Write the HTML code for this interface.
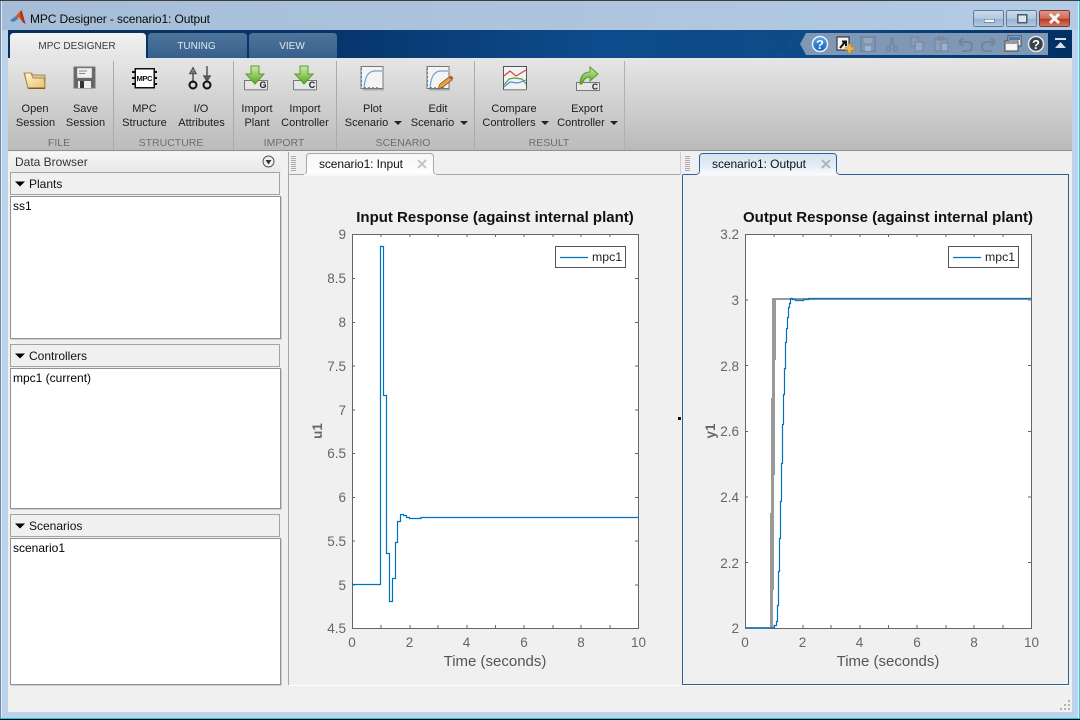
<!DOCTYPE html>
<html><head><meta charset="utf-8"><title>MPC Designer - scenario1: Output</title>
<style>
html,body{margin:0;padding:0;background:#000;width:1080px;height:720px;overflow:hidden}
svg{display:block}
text{font-family:"Liberation Sans",sans-serif}
.rb{font-size:11px;fill:#1c1c1c;text-anchor:middle}
.gl{font-size:10.5px;fill:#6e6e6e;text-anchor:middle}
.pn{font-size:12px;fill:#111}
.li{font-size:12px;fill:#000}
.tke{font-size:13.5px;fill:#666;text-anchor:end}
.tkm{font-size:13.5px;fill:#666;text-anchor:middle}
.axl{font-size:15px;fill:#555;text-anchor:middle}
.ttl{font-size:15px;font-weight:bold;fill:#111;text-anchor:middle}
.ax{fill:#fff;stroke:#666;stroke-width:1}
.tick{stroke:#666;stroke-width:1;fill:none}
.cv{fill:none;stroke:#0072bd;stroke-width:1.2;shape-rendering:geometricPrecision}
</style></head><body>
<svg width="1080" height="720" viewBox="0 0 1080 720" xmlns="http://www.w3.org/2000/svg" shape-rendering="crispEdges">
<defs>
<linearGradient id="frh" x1="0" y1="0" x2="1" y2="0"><stop offset="0" stop-color="#a5bdd8"/><stop offset=".5" stop-color="#aec4dc"/><stop offset="1" stop-color="#b3cbe4"/></linearGradient>
<linearGradient id="band" x1="0" y1="0" x2="1" y2="0"><stop offset="0" stop-color="#06305f"/><stop offset=".3" stop-color="#06356b"/><stop offset=".55" stop-color="#0e4b8c"/><stop offset=".75" stop-color="#0f4a88"/><stop offset="1" stop-color="#013063"/></linearGradient>
<linearGradient id="tb" x1="0" y1="0" x2="0" y2="1"><stop offset="0" stop-color="#e6e6e6"/><stop offset="1" stop-color="#bababa"/></linearGradient>
<linearGradient id="strip" x1="0" y1="0" x2="0" y2="1"><stop offset="0" stop-color="#c2c2c2"/><stop offset="1" stop-color="#bcbcbc"/></linearGradient>
<linearGradient id="at" x1="0" y1="0" x2="0" y2="1"><stop offset="0" stop-color="#f2f2f2"/><stop offset="1" stop-color="#e4e4e4"/></linearGradient>
<linearGradient id="it" x1="0" y1="0" x2="0" y2="1"><stop offset="0" stop-color="#4f7499"/><stop offset="1" stop-color="#35608c"/></linearGradient>
<linearGradient id="hd" x1="0" y1="0" x2="0" y2="1"><stop offset="0" stop-color="#f6f6f6"/><stop offset="1" stop-color="#e8e8e8"/></linearGradient>
<linearGradient id="tabw" x1="0" y1="0" x2="0" y2="1"><stop offset="0" stop-color="#f4f6f8"/><stop offset="1" stop-color="#ffffff"/></linearGradient>
<linearGradient id="tabb" x1="0" y1="0" x2="0" y2="1"><stop offset="0" stop-color="#d3e3f2"/><stop offset=".6" stop-color="#e3edf6"/><stop offset="1" stop-color="#fbfcfd"/></linearGradient>
<linearGradient id="wb" x1="0" y1="0" x2="0" y2="1"><stop offset="0" stop-color="#c9d9ea"/><stop offset=".5" stop-color="#b3c9e0"/><stop offset=".55" stop-color="#96b2cf"/><stop offset="1" stop-color="#b4cbe2"/></linearGradient>
<linearGradient id="wc" x1="0" y1="0" x2="0" y2="1"><stop offset="0" stop-color="#e19a8c"/><stop offset=".5" stop-color="#cf6a56"/><stop offset=".55" stop-color="#b93c26"/><stop offset="1" stop-color="#d2796a"/></linearGradient>
<linearGradient id="fold" x1="0" y1="0" x2="1" y2="1"><stop offset="0" stop-color="#fff8d8"/><stop offset="1" stop-color="#e9bf6c"/></linearGradient>
<linearGradient id="arr" x1="0" y1="0" x2="0" y2="1"><stop offset="0" stop-color="#cdeba6"/><stop offset="1" stop-color="#55a81f"/></linearGradient>
<linearGradient id="blu" x1="0" y1="0" x2="0" y2="1"><stop offset="0" stop-color="#5ba8ea"/><stop offset="1" stop-color="#0f5fb8"/></linearGradient>
<g id="imp">
 <rect x="0.5" y="14.5" width="23" height="9" fill="#e6e6e6" stroke="#777"/>
 <rect x="1" y="23" width="23" height="1.5" fill="#999"/>
 <path d="M7 0H15V8H20L11 18 2 8H7Z" fill="url(#arr)" stroke="#5b9a2c" stroke-width="1" shape-rendering="geometricPrecision"/>
</g>
<g id="plotic">
 <rect x="1" y="0.5" width="22" height="22" fill="#f4f4f4" stroke="#777"/>
 <rect x="3" y="23" width="21" height="1.5" fill="#aaa"/>
 <path d="M1 3h1M1 7h1M1 11h1M1 15h1M1 19h1M5 22v-1M9 22v-1M13 22v-1M17 22v-1" stroke="#333"/>
 <path d="M4 22C5 12 7 6 14 5H22" fill="none" stroke="#6da2d8" stroke-width="1.2" shape-rendering="geometricPrecision"/>
</g>
</defs>

<!-- window frame -->
<rect width="1080" height="720" fill="#bcd3ec"/>
<rect x="0" y="0" width="1080" height="30" fill="url(#frh)"/>
<rect x="0" y="0" width="1080" height="1" fill="#3d3d3d"/>
<rect x="0" y="1" width="1" height="719" fill="#6f8ba8"/>
<rect x="1" y="1" width="1" height="718" fill="#dfeaf5"/>
<rect x="1079" y="1" width="1" height="718" fill="#35c5e0"/>
<rect x="1078" y="1" width="1" height="718" fill="#dfeaf5"/>
<rect x="0" y="718" width="1080" height="1" fill="#19c4e4"/>
<rect x="0" y="719" width="1080" height="1" fill="#0a0a0a"/>

<!-- title -->
<g shape-rendering="geometricPrecision">
 <path d="M10 20.500L15.500 16.500 19 12.500 21.500 10 25.500 24 22 21.500 18.500 17 14.500 20.500 13 21.500Z" fill="#d9531e"/>
 <path d="M21.500 10L25.500 24 23 22.500 20 13Z" fill="#a92f17"/>
 <path d="M10 20.500L15 16.500 18.500 18.500 13.500 22Z" fill="#3f7fbf"/>
</g>
<text x="30" y="23" style="font-size:12px" fill="#0a0a0a" textLength="180">MPC Designer - scenario1: Output</text>

<!-- window buttons -->
<rect x="973.5" y="10.5" width="30" height="16" rx="2" fill="url(#wb)" stroke="#5f7b98"/>
<rect x="984" y="19" width="10" height="3" fill="#f2f6fa" stroke="#4d5f73" stroke-width=".5"/>
<rect x="1006.5" y="10.5" width="30" height="16" rx="2" fill="url(#wb)" stroke="#5f7b98"/>
<rect x="1017.5" y="14.5" width="9" height="8" fill="#dbe6f0" stroke="#4a5c70" stroke-width="1.5"/>
<rect x="1039.5" y="10.5" width="30" height="16" rx="2" fill="url(#wc)" stroke="#7a3a32"/>
<path d="M1050 14L1059 23M1059 14L1050 23" stroke="#f7f7f7" stroke-width="3" shape-rendering="geometricPrecision"/>

<!-- ribbon band -->
<rect x="8" y="30" width="1064" height="28" fill="url(#band)"/>
<g fill="none" stroke="#1f5a97" stroke-width="1" opacity=".35" shape-rendering="geometricPrecision">
 <path d="M780 58L800 30M790 30L812 58M760 30L782 58M800 58L780 30"/>
</g>

<!-- tabs -->
<path d="M10 58V37Q10 33 14 33H142Q146 33 146 37V58Z" fill="url(#at)" shape-rendering="geometricPrecision"/>
<path d="M148 58V37Q148 33 152 33H243Q247 33 247 37V58Z" fill="url(#it)" shape-rendering="geometricPrecision"/>
<path d="M249 58V37Q249 33 253 33H333Q337 33 337 37V58Z" fill="url(#it)" shape-rendering="geometricPrecision"/>
<text x="77" y="49" style="font-size:10px" fill="#3a3a3a" text-anchor="middle">MPC DESIGNER</text>
<text x="196.500" y="49" style="font-size:10px" fill="#dfe8f1" text-anchor="middle">TUNING</text>
<text x="292" y="49" style="font-size:10px" fill="#dfe8f1" text-anchor="middle">VIEW</text>

<!-- quick access -->
<path d="M800 44L806 33H1048V55H806Z" fill="#7f98b6" shape-rendering="geometricPrecision"/>
<g shape-rendering="geometricPrecision">
 <circle cx="820" cy="44" r="7.5" fill="url(#blu)" stroke="#e8f2fb" stroke-width="1.5"/>
 <text x="820" y="49" style="font-size:13px;font-weight:bold" fill="#fff" text-anchor="middle">?</text>
 <rect x="837" y="37" width="12" height="13" fill="#f3f3f3" stroke="#222"/>
 <path d="M840 48L845 42M842 41.5H846V46" stroke="#111" stroke-width="2" fill="none"/>
 <path d="M848 44h3v3h3v3h-3v3h-3v-3h-3v-3h3Z" fill="#f2b544" stroke="#b87f1f" stroke-width=".5"/>
 <g opacity=".55" fill="none" stroke="#66768a">
  <rect x="861" y="37" width="14" height="14" fill="#8296ac" stroke-width="1.5"/><rect x="864" y="38" width="8" height="5" fill="#a5b4c5" stroke="none"/><rect x="865" y="46" width="6" height="5" fill="#c2ccd8" stroke="none"/>
  <path d="M894 37L889 47M890 37L895 47" stroke-width="1.3"/><circle cx="888.5" cy="49" r="2" stroke-width="1.3"/><circle cx="895.5" cy="49" r="2" stroke-width="1.3"/>
  <rect x="911" y="37" width="7" height="9" fill="#93a5b8"/><rect x="915" y="42" width="8" height="9" fill="#a9b8c8"/>
  <rect x="935" y="39" width="12" height="12" fill="#98a9bb"/><rect x="938" y="37" width="6" height="3" fill="#76889c"/><rect x="941" y="43" width="7" height="8" fill="#b6c3d0"/>
  <path d="M959 42H968Q972 42 972 46.5T968 51H962M959 42L963 38M959 42L963 46" stroke-width="2"/>
  <path d="M995 42H986Q982 42 982 46.5T986 51H992M995 42L991 38M995 42L991 46" stroke-width="2"/>
 </g>
 <rect x="1008" y="36" width="13" height="10" fill="#eef2f6" stroke="#444"/><rect x="1009" y="37" width="11" height="3" fill="#3f7fbd"/>
 <rect x="1005" y="41" width="13" height="10" fill="#f5f5f5" stroke="#444"/><rect x="1006" y="42" width="11" height="2" fill="#999"/>
 <circle cx="1036" cy="44" r="7.5" fill="#39424d" stroke="#e2e6ea" stroke-width="1.5"/>
 <text x="1036" y="49" style="font-size:13px;font-weight:bold" fill="#fff" text-anchor="middle">?</text>
</g>
<rect x="1055" y="38" width="11" height="2" fill="#d4dde8"/>
<path d="M1055 48L1060.500 42 1066 48Z" fill="#d4dde8" shape-rendering="geometricPrecision"/>

<!-- toolstrip -->
<rect x="8" y="58" width="1064" height="92" fill="url(#tb)"/>
<rect x="8" y="135" width="616" height="15" fill="url(#strip)"/>
<rect x="8" y="150" width="1064" height="1" fill="#8f8f8f"/>
<rect x="624" y="61" width="1" height="89" fill="#b0b0b0"/>
<path d="M113.500 61V150M233.500 61V150M336.500 61V150M474.500 61V150" stroke="#ababab"/>

<text class="rb" x="35" y="112">Open</text><text class="rb" x="35.500" y="126">Session</text>
<text class="rb" x="85.500" y="112">Save</text><text class="rb" x="85.500" y="126">Session</text>
<text class="rb" x="144.500" y="112">MPC</text><text class="rb" x="144.500" y="126">Structure</text>
<text class="rb" x="201" y="112">I/O</text><text class="rb" x="201.500" y="126">Attributes</text>
<text class="rb" x="257" y="112">Import</text><text class="rb" x="257" y="126">Plant</text>
<text class="rb" x="305" y="112">Import</text><text class="rb" x="305" y="126">Controller</text>
<text class="rb" x="372.500" y="112">Plot</text><text class="rb" x="366.500" y="126">Scenario</text>
<text class="rb" x="438" y="112">Edit</text><text class="rb" x="432.500" y="126">Scenario</text>
<text class="rb" x="514" y="112">Compare</text><text class="rb" x="509" y="126">Controllers</text>
<text class="rb" x="587" y="112">Export</text><text class="rb" x="581" y="126">Controller</text>
<path d="M394 121h8l-4 4ZM460 121h8l-4 4ZM541 121h8l-4 4ZM610 121h8l-4 4Z" fill="#222" shape-rendering="geometricPrecision"/>

<text class="gl" x="59" y="146">FILE</text>
<text class="gl" x="171" y="146">STRUCTURE</text>
<text class="gl" x="284" y="146">IMPORT</text>
<text class="gl" x="403" y="146">SCENARIO</text>
<text class="gl" x="549" y="146">RESULT</text>

<!-- file icons -->
<g shape-rendering="geometricPrecision">
 <path d="M24 73H31L33 75H45V88H28Z" fill="#d9c9a0" stroke="#a98b52"/>
 <path d="M24.500 73L28 88H45L44 78H33L31 73Z" fill="url(#fold)" stroke="#b08a47"/>
 <rect x="28" y="87.500" width="17" height="1.500" fill="#8a5a1c"/>
 <rect x="74" y="67" width="21" height="21" fill="#666" stroke="#777"/>
 <rect x="77" y="68" width="15" height="10" fill="#f0f0f0" stroke="#888" stroke-width=".5"/>
 <path d="M79 71h8M79 73.500h6" stroke="#888"/>
 <rect x="78" y="81" width="13" height="7" fill="#eee"/><rect x="80" y="81" width="4" height="7" fill="#333"/>
</g>
<!-- MPC chip -->
<rect x="135" y="68.500" width="19" height="19" fill="#fff" stroke="#111" stroke-width="1.500"/>
<path d="M132 72h3M132 78h3M132 84h3M154 72h3M154 78h3M154 84h3" stroke="#111" stroke-width="2"/>
<text x="144.500" y="81" style="font-size:7.500px;font-weight:bold" fill="#111" text-anchor="middle" textLength="16">MPC</text>
<!-- IO -->
<g shape-rendering="geometricPrecision" fill="none">
 <path d="M193 83V71M190 73.500L193 68 196 73.500Z" stroke="#555" stroke-width="1.500" fill="#ddd"/>
 <path d="M207 66V82M204 76L207 81 210 76Z" stroke="#555" stroke-width="1.500" fill="#777"/>
 <circle cx="193" cy="85" r="3.500" stroke="#111" stroke-width="2"/>
 <circle cx="207" cy="85" r="3.500" stroke="#111" stroke-width="2"/>
</g>
<use href="#imp" x="244" y="66"/>
<text x="263" y="88" style="font-size:9px;font-weight:bold" fill="#222" text-anchor="middle">G</text>
<use href="#imp" x="293" y="66"/>
<text x="312" y="88" style="font-size:9px;font-weight:bold" fill="#222" text-anchor="middle">C</text>
<use href="#plotic" x="360" y="66"/>
<use href="#plotic" x="426" y="66"/>
<g shape-rendering="geometricPrecision">
 <path d="M438 89L440 84 449 77 452 80 443 87Z" fill="#e8a33d" stroke="#8a5a24" stroke-width=".8"/>
 <path d="M449 77L451 75.500 453.500 78 452 80Z" fill="#c9503a"/>
</g>
<!-- compare -->
<rect x="503.500" y="66.500" width="23" height="23" fill="#f2f2f2" stroke="#555"/>
<rect x="504" y="89" width="23" height="1.500" fill="#999"/>
<g fill="none" shape-rendering="geometricPrecision" stroke-width="1.200">
 <path d="M504 76L510 71 516 76 526 70" stroke="#d8453a"/>
 <path d="M504 85L509 79 514 78 522 79 526 84" stroke="#4fa14a"/>
 <path d="M504 87L510 82 518 83 526 80" stroke="#4f8fd0"/>
</g>
<!-- export -->
<rect x="576.500" y="82.500" width="23" height="8" fill="#e6e6e6" stroke="#777"/>
<text x="595" y="89.500" style="font-size:8.500px;font-weight:bold" fill="#222" text-anchor="middle">C</text>
<path d="M580 84C580 76 584 72 590 72V67L598 74 590 81V77C586 77 584 79 582 84Z" fill="url(#arr)" stroke="#5b9a2c" shape-rendering="geometricPrecision"/>

<!-- main area -->
<rect x="8" y="151" width="1064" height="561" fill="#f0f0f0"/>
<rect x="10" y="152" width="271" height="20" fill="url(#hd)"/>
<text class="pn" x="15" y="166" style="fill:#333">Data Browser</text>
<circle cx="268.500" cy="161.500" r="5.500" fill="#efefef" stroke="#555" shape-rendering="geometricPrecision"/>
<path d="M265.500 160H271.500L268.500 164.500Z" fill="#333" shape-rendering="geometricPrecision"/>

<!-- plants -->
<rect x="10.500" y="172.500" width="269" height="22" fill="#f0f0f0" stroke="#a3a3a3"/>
<path d="M15 181.500H25L20 186.500Z" fill="#000" shape-rendering="geometricPrecision"/>
<text class="pn" x="29" y="188">Plants</text>
<rect x="10.500" y="196.500" width="270" height="142" fill="#fff" stroke="#8f9296"/>
<rect x="281" y="197" width="1" height="142" fill="#cfcfcf"/>
<rect x="11" y="339" width="271" height="1" fill="#cfcfcf"/>
<text class="li" x="13" y="210">ss1</text>
<!-- controllers -->
<rect x="10.500" y="344.500" width="269" height="22" fill="#f0f0f0" stroke="#a3a3a3"/>
<path d="M15 353.500H25L20 358.500Z" fill="#000" shape-rendering="geometricPrecision"/>
<text class="pn" x="29" y="360">Controllers</text>
<rect x="10.500" y="368.500" width="270" height="140" fill="#fff" stroke="#8f9296"/>
<rect x="281" y="369" width="1" height="140" fill="#cfcfcf"/>
<rect x="11" y="509" width="271" height="1" fill="#cfcfcf"/>
<text class="li" x="13" y="382">mpc1 (current)</text>
<!-- scenarios -->
<rect x="10.500" y="514.500" width="269" height="22" fill="#f0f0f0" stroke="#a3a3a3"/>
<path d="M15 523.500H25L20 528.500Z" fill="#000" shape-rendering="geometricPrecision"/>
<text class="pn" x="29" y="530">Scenarios</text>
<rect x="10.500" y="538.500" width="270" height="146" fill="#fff" stroke="#8f9296"/>
<rect x="281" y="539" width="1" height="146" fill="#cfcfcf"/>
<rect x="11" y="685" width="271" height="1" fill="#cfcfcf"/>
<text class="li" x="13" y="552">scenario1</text>

<!-- doc left -->
<rect x="288" y="152" width="1" height="533" fill="#a8a8a8"/>
<rect x="289" y="685" width="391" height="1" fill="#fff"/>
<rect x="289" y="174" width="391" height="1" fill="#a8a8a8"/>
<rect x="680" y="152" width="1" height="23" fill="#cfcfcf"/>
<g fill="#aaa"><rect x="291" y="156" width="5" height="1"/><rect x="291" y="158" width="5" height="1"/><rect x="291" y="160" width="5" height="1"/><rect x="291" y="162" width="5" height="1"/><rect x="291" y="164" width="5" height="1"/><rect x="291" y="166" width="5" height="1"/><rect x="291" y="168" width="5" height="1"/><rect x="291" y="170" width="5" height="1"/></g>
<path d="M303.500 174.500Q306.500 174.500 306.500 171V157Q306.500 153.500 310 153.500H430Q433.500 153.500 433.500 157V171Q433.500 174.500 437 174.500Z" fill="url(#tabw)" stroke="#a8a8a8" shape-rendering="geometricPrecision"/>
<rect x="304" y="174" width="132" height="2" fill="#f8f8f8"/>
<text x="319" y="168" style="font-size:12px" fill="#111" textLength="84">scenario1: Input</text>
<path d="M418 160L426 168M426 160L418 168" stroke="#c6c6c6" stroke-width="2" shape-rendering="geometricPrecision"/>

<rect x="678" y="417" width="3" height="3" fill="#111"/>

<!-- doc right -->
<rect x="682" y="175" width="387" height="510" fill="#f0f0f0"/>
<g fill="#aaa"><rect x="685" y="156" width="5" height="1"/><rect x="685" y="158" width="5" height="1"/><rect x="685" y="160" width="5" height="1"/><rect x="685" y="162" width="5" height="1"/><rect x="685" y="164" width="5" height="1"/><rect x="685" y="166" width="5" height="1"/><rect x="685" y="168" width="5" height="1"/><rect x="685" y="170" width="5" height="1"/></g>
<path d="M682.500 175V684.500H1068.500V174.500H840Q836.500 174.500 836.500 171V157Q836.500 153.500 833 153.500H703Q699.500 153.500 699.500 157V171Q699.500 174.500 696 174.500H682.500" fill="none" stroke="#2a6496" shape-rendering="geometricPrecision"/>
<path d="M700 157Q700 154 703 154H833Q836 154 836 157V171Q836 174 839 174.500H697Q700 174 700 171Z" fill="url(#tabb)" shape-rendering="geometricPrecision"/>
<rect x="698" y="174" width="140" height="2" fill="#f6f8fa"/>
<rect x="682" y="685" width="388" height="1" fill="#fff"/>
<text x="712" y="168" style="font-size:12px" fill="#111" textLength="94">scenario1: Output</text>
<path d="M822 160L830 168M830 160L822 168" stroke="#b4b4b4" stroke-width="2" shape-rendering="geometricPrecision"/>

<!-- grip -->
<g fill="#b5b5a5"><rect x="1068" y="700" width="2" height="2"/><rect x="1064" y="704" width="2" height="2"/><rect x="1068" y="704" width="2" height="2"/><rect x="1060" y="708" width="2" height="2"/><rect x="1064" y="708" width="2" height="2"/><rect x="1068" y="708" width="2" height="2"/></g>

<!-- plot 1 -->
<text class="ttl" x="495" y="222">Input Response (against internal plant)</text>
<rect class="ax" x="352.500" y="234.500" width="286" height="394"/>
<path class="tick" d="M381 234v3M410 234v3M438 234v3M467 234v3M495.500 234v3M524 234v3M553 234v3M581 234v3M610 234v3M381 628v-3M410 628v-3M438 628v-3M467 628v-3M495.500 628v-3M524 628v-3M553 628v-3M581 628v-3M610 628v-3M352 278.500h3M352 322.500h3M352 366h3M352 410h3M352 453.500h3M352 497.500h3M352 541h3M352 585h3M638 278.500h-3M638 322.500h-3M638 366h-3M638 410h-3M638 453.500h-3M638 497.500h-3M638 541h-3M638 585h-3"/>
<path class="cv" d="M352 584.500H380.500V246.500H383.500V395.500H386.500V553.500H389.500V601.500H392.500V578.500H395.500V542.500H397.500V521.500H400.500V514.500H403.500V515.500H406.500V517.500H409.500V518.500H421V517.500H638"/>
<text class="tke" x="346" y="239">9</text><text class="tke" x="346" y="283">8.5</text><text class="tke" x="346" y="327">8</text><text class="tke" x="346" y="371">7.5</text><text class="tke" x="346" y="415">7</text><text class="tke" x="346" y="458">6.5</text><text class="tke" x="346" y="502">6</text><text class="tke" x="346" y="546">5.5</text><text class="tke" x="346" y="590">5</text><text class="tke" x="346" y="633">4.5</text>
<text class="tkm" x="352" y="647">0</text><text class="tkm" x="409.500" y="647">2</text><text class="tkm" x="466.500" y="647">4</text><text class="tkm" x="524" y="647">6</text><text class="tkm" x="581" y="647">8</text><text class="tkm" x="638.500" y="647">10</text>
<text class="axl" x="495" y="666">Time (seconds)</text>
<text x="322" y="431" style="font-size:13.500px;font-weight:bold" fill="#666" text-anchor="middle" transform="rotate(-90 322 431)">u1</text>
<rect x="555.500" y="246.500" width="70" height="21" fill="#fff" stroke="#555"/>
<path class="cv" d="M560 257.500H588"/>
<text x="592" y="261" style="font-size:12.300px" fill="#222">mpc1</text>

<!-- plot 2 -->
<text class="ttl" x="888" y="222">Output Response (against internal plant)</text>
<rect class="ax" x="745.500" y="234.500" width="286" height="394"/>
<path class="tick" d="M774 234v3M803 234v3M831 234v3M860 234v3M888.500 234v3M917 234v3M946 234v3M974 234v3M1003 234v3M774 628v-3M803 628v-3M831 628v-3M860 628v-3M888.500 628v-3M917 628v-3M946 628v-3M974 628v-3M1003 628v-3M745 300h3M745 365.500h3M745 431.500h3M745 497h3M745 562.500h3M1031 300h-3M1031 365.500h-3M1031 431.500h-3M1031 497h-3M1031 562.500h-3"/>
<g fill="#999"><rect x="745" y="627" width="26" height="2"/><rect x="770" y="513" width="3" height="115"/><rect x="771" y="398" width="3" height="192"/><rect x="772" y="298" width="3" height="177"/><rect x="773" y="298" width="3" height="62"/><rect x="775" y="298" width="256" height="2"/></g>
<path class="cv" d="M745 628H774.500V625.500H776.500V621.500H777.500V605.500H778.500V571.500H779.500V538.500H780.500V501.500H781.500V463.500H782.500V424.500H783.500V394.500H784.500V368.500H785.500V342.500H786.500V328.500H787.500V317.500H788.500V307.500H789.500V303.500H790.500V298.500H792.500V299.500H795.500V300.500H803.500V299.500H808.500V298.500H1031"/>
<text class="tke" x="739" y="239">3.2</text><text class="tke" x="739" y="305">3</text><text class="tke" x="739" y="371">2.8</text><text class="tke" x="739" y="436">2.6</text><text class="tke" x="739" y="502">2.4</text><text class="tke" x="739" y="568">2.2</text><text class="tke" x="739" y="633">2</text>
<text class="tkm" x="745" y="647">0</text><text class="tkm" x="802.500" y="647">2</text><text class="tkm" x="859.500" y="647">4</text><text class="tkm" x="917" y="647">6</text><text class="tkm" x="974" y="647">8</text><text class="tkm" x="1031.500" y="647">10</text>
<text class="axl" x="888" y="666">Time (seconds)</text>
<text x="715" y="431" style="font-size:13.500px;font-weight:bold" fill="#666" text-anchor="middle" transform="rotate(-90 715 431)">y1</text>
<rect x="948.500" y="246.500" width="70" height="21" fill="#fff" stroke="#555"/>
<path class="cv" d="M953 257.500H981"/>
<text x="985" y="261" style="font-size:12.300px" fill="#222">mpc1</text>
</svg>
</body></html>
